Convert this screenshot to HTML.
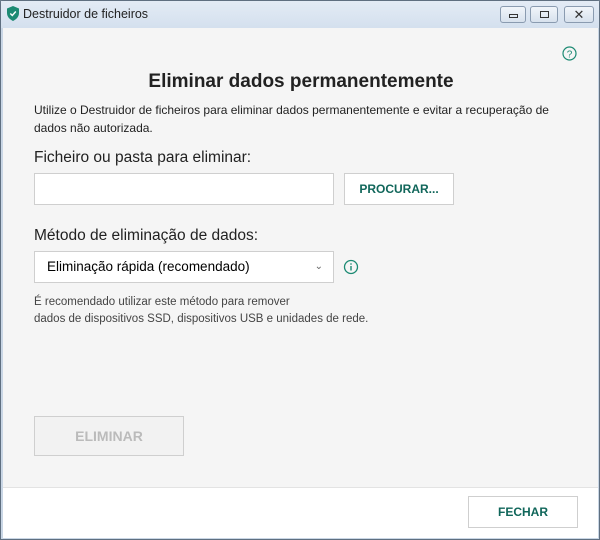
<!DOCTYPE html>
<html><head><meta charset="utf-8"><style>
*{margin:0;padding:0;box-sizing:border-box}
body{width:600px;height:540px;overflow:hidden;font-family:"Liberation Sans",sans-serif;background:#6b7a8a}
.win{position:absolute;left:0;top:0;width:600px;height:540px;background:#c9d6e5;border:1px solid #5f6f80;border-radius:4px 4px 0 0}
.title{position:absolute;left:0;top:0;width:598px;height:27px;background:linear-gradient(#e3ebf5,#d4e0ee)}
.title span{position:absolute;left:22px;top:6px;font-size:12.5px;color:#222}
.btn{position:absolute;top:5px;height:17px;border:1px solid #8a9bb0;border-radius:3px;background:linear-gradient(#f1f5fa,#d7e1ed)}
.content{position:absolute;left:2px;top:27px;width:595px;height:459px;background:#f5f5f5}
.footer{position:absolute;left:2px;top:486px;width:595px;height:51px;background:#fff;border-top:1px solid #e3e3e3}
.t{position:absolute;color:#222}
.box{position:absolute;border:1px solid #cfcfcf;background:#fff}
</style></head><body>
<div class="win">
<div class="title">
<svg style="position:absolute;left:6px;top:5px" width="12" height="15" viewBox="0 0 12 15"><path d="M6 0L12 2.5V7C12 11 9 13.5 6 15C3 13.5 0 11 0 7V2.5Z" fill="#1c8a73"/><path d="M3.3 7.5L5.3 9.5L8.8 5.5" stroke="#fff" stroke-width="1.4" fill="none"/></svg>
<span>Destruidor de ficheiros</span>
<div class="btn" style="left:499px;width:26px"><div style="position:absolute;left:8px;top:7px;width:9px;height:4px;border:1px solid #333"></div></div>
<div class="btn" style="left:529px;width:28px"><div style="position:absolute;left:9px;top:4px;width:9px;height:7px;border:1px solid #333"></div></div>
<div class="btn" style="left:563px;width:30px;font-size:13px;text-align:center;line-height:15px;color:#333">✕</div>
</div>
<div class="content"></div>
<svg style="position:absolute;left:561px;top:45px" width="15" height="15" viewBox="0 0 15 15"><circle cx="7.5" cy="7.5" r="6.5" fill="none" stroke="#1c8a73" stroke-width="1.2"/><text x="7.5" y="11.5" font-size="10" text-anchor="middle" fill="#1c8a73" font-family="Liberation Sans">?</text></svg>
<div class="t" style="left:0;width:600px;text-align:center;top:70px;font-size:19px;font-weight:bold">Eliminar dados permanentemente</div>
<div class="t" style="left:33px;top:100px;font-size:12px;line-height:18px;width:565px;white-space:nowrap">Utilize o Destruidor de ficheiros para eliminar dados permanentemente e evitar a recuperação de<br>dados não autorizada.</div>
<div class="t" style="left:33px;top:148px;font-size:15.5px">Ficheiro ou pasta para eliminar:</div>
<div class="box" style="left:33px;top:172px;width:300px;height:32px"></div>
<div class="box" style="left:343px;top:172px;width:110px;height:32px;text-align:center;line-height:30px;font-size:12px;font-weight:bold;color:#10665a">PROCURAR...</div>
<div class="t" style="left:33px;top:226px;font-size:15.5px">Método de eliminação de dados:</div>
<div class="box" style="left:33px;top:250px;width:300px;height:32px;font-size:13.5px;line-height:30px;padding-left:12px">Eliminação rápida (recomendado)<span style="position:absolute;right:10px;top:0;font-size:10px;color:#666">⌄</span></div>
<svg style="position:absolute;left:342px;top:258px" width="16" height="16" viewBox="0 0 16 16"><circle cx="8" cy="8" r="6.5" fill="none" stroke="#1c8a73" stroke-width="1.3"/><rect x="7.3" y="7" width="1.4" height="4.5" fill="#1c8a73"/><rect x="7.3" y="4.3" width="1.4" height="1.4" fill="#1c8a73"/></svg>
<div class="t" style="left:33px;top:293px;font-size:11.5px;line-height:17px;color:#444">É recomendado utilizar este método para remover<br>dados de dispositivos SSD, dispositivos USB e unidades de rede.</div>
<div class="box" style="left:33px;top:415px;width:150px;height:40px;background:#f2f2f2;text-align:center;line-height:38px;font-size:14px;font-weight:bold;color:#bbb">ELIMINAR</div>
<div class="footer"></div>
<div class="box" style="left:467px;top:495px;width:110px;height:32px;text-align:center;line-height:30px;font-size:12px;font-weight:bold;color:#10665a">FECHAR</div>
</div>
</body></html>
